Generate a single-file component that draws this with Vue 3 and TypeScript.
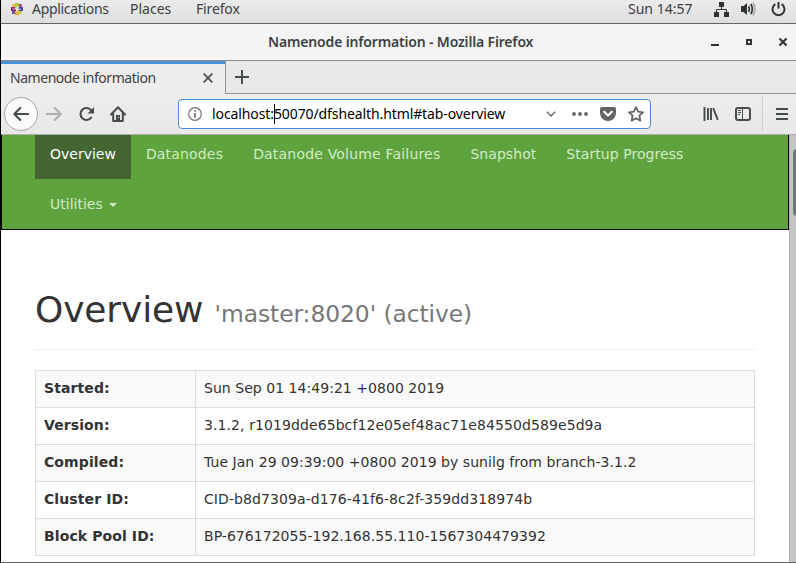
<script setup lang="ts">
interface Row {
  label: string
  value: string
}

const links: string[] = ['Overview', 'Datanodes', 'Datanode Volume Failures', 'Snapshot', 'Startup Progress']

const rows: Row[] = [
  { label: 'Started:', value: 'Sun Sep 01 14:49:21 +0800 2019' },
  { label: 'Version:', value: '3.1.2, r1019dde65bcf12e05ef48ac71e84550d589e5d9a' },
  { label: 'Compiled:', value: 'Tue Jan 29 09:39:00 +0800 2019 by sunilg from branch-3.1.2' },
  { label: 'Cluster ID:', value: 'CID-b8d7309a-d176-41f6-8c2f-359dd318974b' },
  { label: 'Block Pool ID:', value: 'BP-676172055-192.168.55.110-1567304479392' },
]
</script>

<template>
  <div class="desktop">
    <header class="panel">
      <svg class="distro" width="14" height="14" viewBox="0 0 14 14">
        <path d="M5 1h2v5H5zM7 1h2v4H7z" fill="#9ccd2a" />
        <path d="M9 5h4v2H8zM9 7h4v2H9z" fill="#4b4a9c" />
        <path d="M5 9h2v4H5zM7 8h2v5H7z" fill="#efa724" />
        <path d="M1 5h4v2H1zM1 7h5v2H1z" fill="#932279" />
        <path d="M2 2h3v3H2z" fill="#f2bd55" />
        <path d="M9 2h3v3H9z" fill="#b04a9a" />
        <path d="M9 9h3v3H9z" fill="#b5d867" />
        <path d="M2 9h3v3H2z" fill="#5d5ca0" />
        <path d="M7 3v8M3 7h8" stroke="#eee" stroke-width=".7" />
      </svg>
      <span class="apps">Applications</span>
      <span class="places">Places</span>
      <span class="ff">Firefox</span>
      <span class="clock">Sun 14:57</span>
      <svg class="net" width="16" height="16" viewBox="0 0 16 16">
        <path d="M5 1h5v5H5zM0 11h5v5H0zM10 11h5v5h-5z" fill="#2e3436" />
        <path d="M7.5 6v3M2.5 11V8.5h10V11" fill="none" stroke="#2e3436" />
      </svg>
      <svg class="vol" width="16" height="14" viewBox="0 0 16 14">
        <path d="M0 4h2.5L6 1v12l-3.500-3H0z" fill="#2e3436" />
        <path d="M7.600 4.200q1.600 2.800 0 5.600M9.800 2q3 5 0 10" fill="none" stroke="#2e3436" stroke-width="1.700" />
        <path d="M12 .7q3.600 6.300 0 12.600" fill="none" stroke="#aaa" stroke-width="1.700" />
      </svg>
      <svg class="power" width="15" height="16" viewBox="0 0 15 16">
        <path d="M4.300 3.200a6 6 0 1 0 6.400 0M7.500 1v6.500" fill="none" stroke="#2e3436" stroke-width="2" />
      </svg>
    </header>

    <div class="titlebar">
      <span class="title">Namenode information - Mozilla Firefox</span>
      <svg class="controls" width="78" height="12" viewBox="0 0 78 12">
        <path d="M0 8h8v2H0z" fill="#2e3436" />
        <path d="M36 4h4v4h-4z" fill="none" stroke="#2e3436" stroke-width="2" />
        <path d="M68.500 2.500l7 7M75.500 2.500l-7 7" stroke="#2e3436" stroke-width="2" />
      </svg>
    </div>

    <div class="tabs">
      <div class="tab">
        <span class="tabname">Namenode information</span>
        <svg width="10" height="10" viewBox="0 0 10 10">
          <path d="M.7.7l8.6 8.6M9.300.7L.7 9.300" stroke="#4a5052" stroke-width="1.700" />
        </svg>
      </div>
      <div class="newtab">
        <svg width="14" height="14" viewBox="0 0 14 14">
          <path d="M7 0v14M0 7h14" stroke="#464c4e" stroke-width="2" />
        </svg>
      </div>
    </div>

    <div class="toolbar">
      <div class="back">
        <svg width="16" height="14" viewBox="0 0 16 14">
          <path d="M15.300 7H1.500M7.300 1L1.300 7l6 6" fill="none" stroke="#464c4e" stroke-width="2" stroke-linecap="round" stroke-linejoin="round" />
        </svg>
      </div>
      <svg class="forward" width="16" height="14" viewBox="0 0 16 14">
        <path d="M.7 7h13.800M8.700 1l6 6-6 6" fill="none" stroke="#aeb0af" stroke-width="2" stroke-linecap="round" stroke-linejoin="round" />
      </svg>
      <svg class="reload" width="16" height="16" viewBox="0 0 16 16">
        <path d="M12.200 11.700A6 6 0 1 1 12 4" fill="none" stroke="#464c4e" stroke-width="2.100" stroke-linecap="round" />
        <path d="M15 1v6.500H8.500z" fill="#464c4e" />
      </svg>
      <svg class="home" width="16" height="16" viewBox="0 0 16 16">
        <path d="M1 8.500L8 1.300l7 7.200M3.200 8v7h9.600V8" fill="none" stroke="#464c4e" stroke-width="2" stroke-linecap="round" stroke-linejoin="round" />
        <path d="M6 14V9h4v5z" fill="#464c4e" />
        <path d="M8 11h1v1H8z" fill="#ddd" />
      </svg>
      <div class="urlbar">
        <svg width="14" height="14" viewBox="0 0 14 14">
          <circle cx="7" cy="7" r="6.300" fill="none" stroke="#737373" stroke-width="1.200" />
          <path d="M7 6v4.800M7 3.200v1.600" stroke="#737373" stroke-width="1.700" />
        </svg>
        <span class="url"><span class="host">localhost:</span><i class="caret"></i><span class="path">50070/dfshealth.html#tab-overview</span></span>
        <svg class="drop" width="10" height="6" viewBox="0 0 10 6">
          <path d="M.8.8L5 5 9.200.8" fill="none" stroke="#6a6a6a" stroke-width="1.400" />
        </svg>
        <svg class="dots" width="16" height="4" viewBox="0 0 16 4">
          <circle cx="2" cy="2" r="1.900" fill="#666" /><circle cx="8" cy="2" r="1.900" fill="#666" /><circle cx="14" cy="2" r="1.900" fill="#666" />
        </svg>
        <svg class="pocket" width="16" height="14" viewBox="0 0 16 14">
          <path d="M1.800 0h12.400Q16 0 16 1.800V6a8 8 0 0 1-16 0V1.800Q0 0 1.800 0z" fill="#666" />
          <path d="M4.200 4.800L8 8.500l3.800-3.700" fill="none" stroke="#fff" stroke-width="2" stroke-linecap="round" stroke-linejoin="round" />
        </svg>
        <svg class="star" width="16" height="16" viewBox="0 0 16 16">
          <path d="M8 1.200l2.100 4.400 4.900.7-3.600 3.300.9 5L8 12.200l-4.300 2.400.9-5L1 6.300l4.900-.7z" fill="none" stroke="#666" stroke-width="1.800" stroke-linejoin="round" />
        </svg>
      </div>
      <svg class="library" width="16" height="14" viewBox="0 0 16 14">
        <path d="M1.500 0v14M5 1v12M8 1v12M10.200 1.200l4.600 11.600" stroke="#464c4e" stroke-width="1.900" />
      </svg>
      <svg class="sidebar" width="16" height="14" viewBox="0 0 16 14">
        <rect x="1" y="1" width="14" height="12" rx="2" fill="none" stroke="#464c4e" stroke-width="2" />
        <path d="M7.500 1v12" stroke="#464c4e" />
        <path d="M3 3.500h3M3 5.500h3M3 7.500h2" stroke="#464c4e" />
      </svg>
      <div class="divider"></div>
      <svg class="menu" width="12" height="12" viewBox="0 0 12 12">
        <path d="M0 1h12M0 6h12M0 11h12" stroke="#464c4e" stroke-width="2" />
      </svg>
    </div>

    <div class="viewport">
      <main class="page">
        <nav class="navbar">
          <a v-for="(l, i) in links" :key="l" :class="['link', { active: i === 0 }]">{{ l }}</a>
          <a class="link second">Utilities<b class="arrow"></b></a>
        </nav>
        <section class="content">
          <h1>Overview <small>'master:8020' (active)</small></h1>
          <table>
            <tbody>
              <tr v-for="r in rows" :key="r.label">
                <th>{{ r.label }}</th>
                <td>{{ r.value }}</td>
              </tr>
            </tbody>
          </table>
        </section>
      </main>
      <div class="scrollbar"><div class="thumb"></div></div>
    </div>
  </div>
</template>

<style>
body {
  margin: 0;
  overflow: hidden;
}
</style>

<style scoped>
* {
  box-sizing: border-box;
}
svg {
  display: block;
  flex: none;
}
.desktop {
  width: 796px;
  height: 563px;
  border-left: 1px solid #000;
  border-bottom: 1px solid #666;
  display: flex;
  flex-direction: column;
  overflow: hidden;
  background: #fff;
  font-family: "Noto Sans", "Open Sans", sans-serif;
  font-size: 14px;
  color: #3c4143;
  white-space: nowrap;
}
.panel {
  height: 24px;
  flex: none;
  display: flex;
  align-items: center;
  padding: 0 10px 5px 9px;
  border-bottom: 1px solid #666;
  background: linear-gradient(#ebebeb, #dedede);
}
.panel span {
  margin-bottom: 1px;
}
.distro {
  margin-right: 8px;
}
.apps {
  width: 98px;
  letter-spacing: -0.32px;
}
.places {
  width: 66px;
}
.ff {
  letter-spacing: -0.15px;
}
.clock {
  margin-left: auto;
  width: 86px;
}
.net {
  margin-right: 11px;
}
.vol {
  margin-right: 14px;
}
.titlebar {
  height: 36px;
  flex: none;
  display: flex;
  align-items: center;
  justify-content: flex-end;
  background: #f4f4f4;
  padding-right: 7px;
}
.title {
  font-weight: 600;
  width: 443px;
  margin-bottom: 2px;
  letter-spacing: -0.16px;
}
.controls {
  margin-bottom: 1px;
}
.tabs {
  height: 34px;
  flex: none;
  display: flex;
  border-top: 1px solid #8b8c89;
  background: #e8e8e7;
}
.tab {
  width: 224px;
  border-top: 3px solid #4a90d9;
  background: #ededec;
  display: flex;
  align-items: center;
  justify-content: space-between;
  padding: 0 12px 2px 9px;
}
.tabname {
  margin-bottom: 2px;
  letter-spacing: -0.46px;
}
.newtab {
  flex: 1;
  display: flex;
  align-items: center;
  padding-left: 9px;
  border-left: 1px solid #949593;
  border-bottom: 1px solid #949593;
}
.toolbar {
  height: 41px;
  flex: none;
  display: flex;
  align-items: center;
  border-bottom: 1px solid #acacab;
  background: linear-gradient(#ededec, #e8e8e7);
}
.back {
  width: 34px;
  height: 34px;
  margin-left: 3px;
  border: 1px solid #a7a7a6;
  border-radius: 50%;
  background: #fbfbfb;
  display: flex;
  align-items: center;
  justify-content: center;
}
.forward {
  margin-left: 8px;
}
.reload {
  margin-left: 17px;
}
.home {
  margin-left: 15px;
}
.urlbar {
  width: 473px;
  height: 30px;
  margin-left: 52px;
  border: 1px solid #4a90d9;
  border-radius: 4px;
  background: #fff;
  display: flex;
  align-items: center;
  padding-left: 9px;
  color: #000;
}
.url {
  display: flex;
  align-items: center;
  width: 334px;
  margin-left: 10px;
  margin-bottom: 1px;
  letter-spacing: -0.1px;
}
.caret {
  width: 1px;
  height: 20px;
  margin-right: -1px;
  background: #000;
}
.dots {
  margin-left: 16px;
}
.pocket {
  margin-left: 12px;
}
.star {
  margin-left: 12px;
}
.library {
  margin-left: 52px;
}
.sidebar {
  margin-left: 16px;
}
.divider {
  width: 1px;
  height: 34px;
  margin: 0 13px 0 11px;
  background: #cfcfce;
}
.viewport {
  flex: 1;
  min-height: 0;
  display: flex;
  font-family: "DejaVu Sans", sans-serif;
  line-height: 20px;
  color: #333;
}
.page {
  width: 788px;
}
.navbar {
  height: 95px;
  display: flex;
  flex-wrap: wrap;
  align-content: flex-start;
  padding: 0 32px 0 33px;
  border: 1px solid #000;
  border-top: 0;
  background: #5fa33e;
}
.link {
  height: 44px;
  padding: 9px 15px 15px;
  color: #d2ebc7;
  letter-spacing: 0.06px;
}
.link:nth-child(2) {
  letter-spacing: 0.17px;
}
.link:nth-child(3) {
  letter-spacing: 0.19px;
}
.link.active {
  background: #446633;
  color: #fff;
  letter-spacing: 0;
}
.link.second {
  height: 50px;
  padding-top: 15px;
  letter-spacing: 0;
}
.arrow {
  display: inline-block;
  margin-left: 6px;
  vertical-align: middle;
  border: 4px solid transparent;
  border-top-color: currentColor;
  border-bottom: 0;
}
.content {
  padding: 60px 34px 0;
}
h1 {
  height: 60px;
  margin: 0 0 20px;
  border-bottom: 1px solid #eee;
  font-size: 36px;
  font-weight: 500;
  line-height: 39.6px;
  letter-spacing: -0.15px;
}
small {
  font-size: 23.4px;
  font-weight: 400;
  color: #777;
  line-height: 1;
  letter-spacing: -0.07px;
}
table {
  width: 720px;
  border-collapse: collapse;
  table-layout: fixed;
}
th,
td {
  height: 37px;
  padding: 0 8px 2px;
  border: 1px solid #ddd;
  text-align: left;
  letter-spacing: 0.04px;
}
th {
  width: 160px;
  letter-spacing: 0.1px;
}
tr:nth-child(2) td,
tr:nth-child(4) td {
  letter-spacing: 0.09px;
}
tr:nth-child(odd) {
  background: #f9f9f9;
}
.scrollbar {
  width: 8px;
  flex: none;
  padding: 14px 0 0 3px;
  overflow: hidden;
  border-left: 1px solid #aeb0ae;
  background: #c4c6c4;
}
.thumb {
  width: 8px;
  height: 67px;
  border-radius: 4px;
  background: #747878;
}
</style>
